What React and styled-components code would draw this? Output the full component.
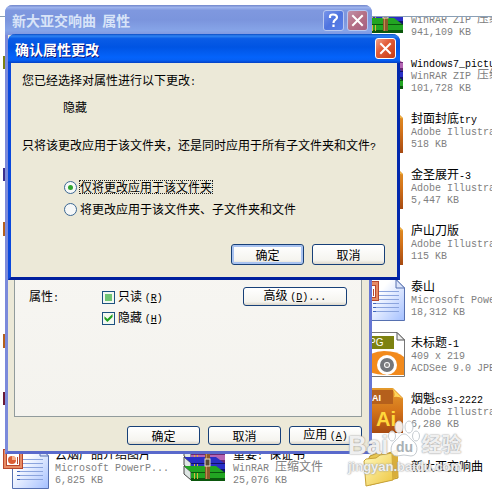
import React, { useEffect, useRef } from "react";
import styled, { createGlobalStyle } from "styled-components";

const GlobalStyle = createGlobalStyle`
  * { box-sizing: border-box; }
  body { margin: 0; background: #fff; }
  body, button, input { font: 12px/12px "Noto Sans CJK SC", sans-serif; color: #000; }
`;

const Desktop = styled.main`
  position: relative;
  height: 100vh;
  overflow: hidden;
  padding-top: 16px;
`;
const FileList = styled.section`
  height: 100%;
  overflow: hidden;
  border-top: 1px solid #8a9fb5;
`;
const Columns = styled.div`
  display: grid;
  grid-template-columns: 178px 178px 1fr;
  margin-top: -27px;
`;
const Column = styled.div`
  display: flex;
  flex-direction: column;
  justify-content: flex-end;
  min-width: 0;
`;
const Tile = styled.article`
  display: flex;
  align-items: center;
  gap: 7px;
  height: 56px;
  white-space: nowrap;
  overflow: hidden;
  svg { flex: none; overflow: visible; }
`;
const FileText = styled.div`
  display: flex;
  flex-direction: column;
  color: #808080;
`;
const Line = styled.span`
  height: 12px;
  color: ${(p) => (p.$name ? "#000" : "inherit")};
`;
const Latin = styled.span`
  font-family: "Liberation Mono", monospace;
  font-size: 10px;
`;

const Win = styled.section`
  position: absolute;
  border-radius: 8px 8px 0 0;
  background: #ece9d8;
  border: 3px solid;
  border-top: 0;
`;
const PropertiesWin = styled(Win)`
  left: 5px;
  right: 120px;
  top: 5px;
  border-color: #7b88dc #6676d4 #5969cb #7b8adb;
`;
const ConfirmWin = styled(Win)`
  left: 8px;
  right: 92px;
  top: 34px;
  border-color: #0a48dc #0228ac #001f9e #0a48dc;
`;
const TitleBar = styled.header`
  display: flex;
  align-items: center;
  gap: 3px;
  height: ${(p) => (p.$active ? "29px" : "30px")};
  margin: 0 -3px;
  padding: 0 4px 0 7px;
  border-radius: 7px 7px 0 0;
  background: ${(p) =>
    p.$active
      ? "linear-gradient(#0a4cc4 0, #2f83f2 7%, #0a5ce6 16%, #0054e3 45%, #0463fb 80%, #0560f5 90%, #0340c4 100%)"
      : "linear-gradient(#7085ca 0, #9db3ec 8%, #7f98df 18%, #7b95dd 50%, #86a4e8 85%, #7f95df 100%)"};
`;
const Title = styled.h1`
  flex: 1;
  margin: 0;
  font-size: 14px;
  line-height: 20px;
  font-weight: 700;
  white-space: pre;
  color: ${(p) => (p.$active ? "#fff" : "#d8e4f8")};
  text-shadow: ${(p) => (p.$active ? "1px 1px #0a1883" : "none")};
`;
const CaptionButton = styled.button`
  width: 21px;
  height: 21px;
  padding: 0;
  display: grid;
  place-items: center;
  border: 1px solid ${(p) => (p.$kind === "close" ? "#fff" : "#b8c8f0")};
  border-radius: 3px;
  background: ${(p) =>
    ({
      close: "linear-gradient(135deg, #f0a088, #e35d3a 40%, #c63c14)",
      dimClose: "linear-gradient(135deg, #c090a8, #b56f84 50%, #a56082)",
      help: "linear-gradient(135deg, #7794ea, #4f74df 50%, #5a80e8)",
    })[p.$kind]};
`;

const PropertiesBody = styled.div`
  padding: 4px 7px 6px 6px;
`;
const TabPanel = styled.div`
  display: flex;
  align-items: flex-start;
  padding: 247px 14px 89px;
  background: linear-gradient(#fbfaf8, #f4f3ee);
  border: 1px solid #919b9c;
`;
const GroupLabel = styled.span`
  width: 73px;
  line-height: 18px;
`;
const Checks = styled.div`
  flex: 1;
  display: flex;
  flex-direction: column;
  align-items: flex-start;
  gap: 3px;
  padding-top: 1px;
`;
const Choice = styled.label`
  display: flex;
  align-items: center;
  gap: 3px;
  height: 18px;
  white-space: nowrap;
`;
const CheckBox = styled.input`
  appearance: none;
  width: 13px;
  height: 13px;
  margin: 0;
  border: 1px solid #1c5180;
  background: #f3f8f1;
  display: grid;
  place-items: center;
  &:indeterminate::before {
    content: "";
    width: 7px;
    height: 7px;
    background: #70c474;
  }
  &:checked:not(:indeterminate)::before {
    content: "";
    width: 9px;
    height: 9px;
    background: #21a121;
    clip-path: polygon(5% 30%, 38% 60%, 95% 5%, 95% 38%, 38% 95%, 5% 62%);
  }
`;
const Radio = styled.input`
  appearance: none;
  width: 13px;
  height: 13px;
  margin: 0;
  border: 1px solid #3b6793;
  border-radius: 50%;
  background: #f6f8f8;
  display: grid;
  place-items: center;
  &:checked::before {
    content: "";
    width: 5px;
    height: 5px;
    border-radius: 50%;
    background: #2fa52f;
  }
`;
const RadioText = styled.span`
  line-height: 12px;
  outline: ${(p) => (p.$focused ? "1px dotted #222" : "none")};
`;
const Button = styled.button`
  width: ${(p) => (p.$wide ? "104px" : "73px")};
  height: ${(p) => (p.$tall ? "21px" : "19px")};
  padding: 0;
  line-height: 14px;
  border: 1px solid #174078;
  border-radius: 3px;
  background: linear-gradient(#fff, #f5f4ef 80%, #dcd7cb);
  box-shadow: ${(p) =>
    p.$primary ? "inset 0 0 0 2px #a9c3f0" : "none"};
`;
const ButtonRow = styled.footer`
  display: flex;
  justify-content: flex-end;
  gap: 8px;
  padding-top: ${(p) => p.$top};
`;

const ConfirmBody = styled.div`
  padding: 8px 12px 12px 11px;
`;
const Message = styled.p`
  margin: 0;
  line-height: 18px;
  white-space: nowrap;
`;
const Change = styled(Message)`
  padding: 6px 0 20px 41px;
`;
const Options = styled.fieldset`
  display: flex;
  flex-direction: column;
  align-items: flex-start;
  gap: 4px;
  margin: 0;
  border: 0;
  padding: 21px 0 0 42px;
`;

const Watermark = styled.div`
  position: absolute;
  right: 28px;
  bottom: 16px;
  width: 116px;
  pointer-events: none;
  color: rgba(255, 255, 255, 0.85);
  text-shadow: 0 0 2px #999, 0 0 1px #aaa;
  font-family: "Liberation Sans", "Noto Sans CJK SC", sans-serif;
  font-weight: 700;
`;
const Brand = styled.div`
  display: flex;
  align-items: flex-end;
  height: 46px;
  font-size: 26px;
  line-height: 26px;
`;
const Paw = styled.div`
  display: grid;
  place-items: end center;
  > * { grid-area: 1 / 1; }
`;
const Du = styled.span`
  font-size: 14px;
  line-height: 22px;
  color: #a9b1b5;
  text-shadow: none;
`;
const Experience = styled.span`
  font-size: 20px;
  padding-left: 1px;
`;
const SiteName = styled.div`
  font-size: 13px;
  line-height: 18px;
`;

function Mixed({ children }) {
  return children
    .split(/([\x20-\x7e]+)/)
    .filter(Boolean)
    .map((t, i) => (/^[\x20-\x7e]/.test(t) ? <Latin key={i}>{t}</Latin> : t));
}

function Key({ children }) {
  return (
    <Latin>
      (<u>{children}</u>)
    </Latin>
  );
}

const Cross = () => (
  <svg width="13" height="13" viewBox="0 0 13 13" stroke="#fff" strokeWidth="2" strokeLinecap="square">
    <path d="M2 2 11 11M11 2 2 11" />
  </svg>
);
const Question = () => (
  <svg width="13" height="15" viewBox="0 0 13 15" stroke="#fff" strokeWidth="2.2" fill="none">
    <path d="M3 5V3.5Q3 1.5 6 1.5Q10 1.5 10 4.2Q10 5.8 8 7Q6.5 8 6.5 10M6.5 11.5V14" />
  </svg>
);

function DocIcon({ tag, color }) {
  return (
    <svg width="48" height="48" viewBox="0 0 48 48">
      <path d="M9 2.500H41L48.500 10V46.500H9Z" fill="#fff" stroke="#777" />
      <path d="M41 2.500V10H48.500Z" fill="#eee" stroke="#555" />
      <rect x="3" y="6" width="35" height="13" fill={color} />
      <text x="8" y="16" fontSize="10" fontFamily="Liberation Sans" fill="#fff">{tag}</text>
      <path d="M9 31Q14 21 28 21Q42 21 48 27V45H29Q13 44 9 38Z" fill="#f28a1c" />
      <circle cx="31" cy="35" r="10" fill="#fff" />
      <circle cx="31" cy="35" r="5" fill="#fff" stroke="#74777c" strokeWidth="4" />
      <circle cx="31" cy="35" r="2" fill="#888" />
    </svg>
  );
}
function AiIcon() {
  return (
    <svg width="48" height="48" viewBox="0 0 48 48">
      <defs>
        <linearGradient id="ai" x1="0" y1="0" x2="0" y2="1">
          <stop offset="0" stopColor="#e49a2c" />
          <stop offset="0.5" stopColor="#d4741a" />
          <stop offset="1" stopColor="#a64a12" />
        </linearGradient>
      </defs>
      <path d="M10 2H37L47 12V47H10Z" fill="url(#ai)" />
      <path d="M36 2Q40 8 38 11Q43 10 47 13Z" fill="#ffd65a" />
      <rect x="3" y="4" width="34" height="14" fill="#b5601c" />
      <text x="16" y="15" fontSize="9" fontWeight="700" fontFamily="Liberation Sans" fill="#fff">AI</text>
      <text x="20" y="40" fontSize="20" fontWeight="700" fontFamily="Liberation Sans" fill="#ffd83c">Ai</text>
    </svg>
  );
}
function PptIcon() {
  return (
    <svg width="48" height="48" viewBox="0 0 48 48">
      <defs>
        <linearGradient id="ppt" x1="0" y1="0" x2="1" y2="1">
          <stop offset="0.3" stopColor="#fff" />
          <stop offset="1" stopColor="#a3bfff" />
        </linearGradient>
      </defs>
      <path d="M12.500 5.500H40L48.500 14V46.500H12.500Z" fill="url(#ppt)" stroke="#5670b0" />
      <path d="M40 5.500V14H48.500Z" fill="#dce5fa" stroke="#5670b0" />
      <path d="M17 17.500H43M17 21.500H43M17 25.500H43M17 29.500H43M17 33.500H43M17 37.500H43" stroke="#8ba4dd" />
      <path d="M17 29.500H20M17 33.500H20M17 37.500H20" stroke="#3f65bd" />
      <rect x="3.500" y="7.500" width="19" height="19" fill="#e68b64" stroke="#b8472c" />
      <rect x="6.500" y="11.500" width="13" height="12" fill="#fff" stroke="#b8472c" />
      <circle cx="12" cy="18" r="4" fill="#db5e35" />
      <path d="M12 18V14A4 4 0 0 1 16 18Z" fill="#f7b18d" />
      <path d="M17.500 15V22" stroke="#b8472c" />
    </svg>
  );
}
function RarIcon() {
  const books = [["#b565b4", "#6b2a73", 12], ["#2a2fc6", "#11116a", 21], ["#22a522", "#0b570d", 30]];
  return (
    <svg width="48" height="48" viewBox="0 0 48 48">
      {books.map(([light, dark, y]) => (
        <g key={y}>
          <path d={`M6 ${y - 6}L13 ${y}V${y + 8}L6 ${y + 2}Z`} fill="#dfe6e4" stroke="#444" />
          <path d={`M6 ${y - 6}H38L46 ${y}H13Z`} fill={light} />
          <rect x="13" y={y} width="34" height="9" fill={dark} />
          <rect x="13" y={y + 1} width="34" height="5" fill={light} />
          <path d={`M16.500 ${y + 1}V${y + 7}M19.500 ${y + 1}V${y + 7}`} stroke="#d8b83a" />
        </g>
      ))}
      <path d="M27 4H32V37H27Z" fill="#8c5a2c" />
      <path d="M28.500 4V37" stroke="#c38d52" />
      <rect x="27" y="17" width="5" height="7" fill="#5c4a35" stroke="#e7dfcb" />
    </svg>
  );
}
function FolderIcon() {
  return (
    <svg width="48" height="48" viewBox="0 0 48 48">
      <defs>
        <linearGradient id="folder" x1="0" y1="0" x2="1" y2="1">
          <stop offset="0" stopColor="#fffbc0" />
          <stop offset="1" stopColor="#eec53f" />
        </linearGradient>
      </defs>
      <path d="M12 18 14 14 24 10 27 13 41 8 42 36 14 43Z" fill="#e9c854" stroke="#b8942c" />
      <path d="M8 19 10 17 20 16 24 13 36 11 37 38 10 44Z" fill="url(#folder)" stroke="#c7a238" />
      <path d="M37 38 42 34V9L36 11Z" fill="#d9ae3a" />
    </svg>
  );
}

const icons = {
  rar: <RarIcon />,
  ai: <AiIcon />,
  ppt: <PptIcon />,
  jpg: <DocIcon tag="JPG" color="#7d8210" />,
  psd: <DocIcon tag="PSD" color="#3b2f8f" />,
  pdf: <DocIcon tag="PDF" color="#6a1a38" />,
  folder: <FolderIcon />,
};

const files = [
  [
    ["jpg"], ["rar"], ["psd"], ["ai"], ["rar"], ["ai"], ["pdf"],
    ["ppt", "云烟产品介绍图片", "Microsoft PowerP...", "6,825 KB"],
  ],
  [["rar", "重要: 保证书", "WinRAR 压缩文件", "25,076 KB"]],
  [
    ["rar", "", "WinRAR ZIP 压缩文件", "941,109 KB"],
    ["rar", "Windows7_picture", "WinRAR ZIP 压缩文件", "101,728 KB"],
    ["ai", "封面封底try", "Adobe Illustrator", "518 KB"],
    ["ai", "金圣展开-3", "Adobe Illustrator", "5,447 KB"],
    ["ai", "庐山刀版", "Adobe Illustrator", "115 KB"],
    ["ppt", "泰山", "Microsoft PowerPoint", "18,312 KB"],
    ["jpg", "未标题-1", "409 x 219", "ACDSee 9.0 JPEG"],
    ["ai", "烟魁cs3-2222", "Adobe Illustrator", "6,280 KB"],
    ["folder", "新大亚交响曲"],
  ],
];

function FileTile({ file: [icon, ...lines] }) {
  return (
    <Tile>
      {icons[icon]}
      <FileText>
        {lines.map((line, i) => (
          <Line key={i} $name={i === 0}>
            <Mixed>{line}</Mixed>
          </Line>
        ))}
      </FileText>
    </Tile>
  );
}

function Properties() {
  const readOnly = useRef(null);
  useEffect(() => {
    readOnly.current.indeterminate = true;
  }, []);
  return (
    <PropertiesWin>
      <TitleBar>
        <Title>新大亚交响曲  属性</Title>
        <CaptionButton $kind="help" aria-label="帮助"><Question /></CaptionButton>
        <CaptionButton $kind="dimClose" aria-label="关闭"><Cross /></CaptionButton>
      </TitleBar>
      <PropertiesBody>
        <TabPanel>
          <GroupLabel>属性<Latin>:</Latin></GroupLabel>
          <Checks>
            <Choice><CheckBox ref={readOnly} type="checkbox" /><span>只读 <Key>R</Key></span></Choice>
            <Choice><CheckBox type="checkbox" defaultChecked /><span>隐藏 <Key>H</Key></span></Choice>
          </Checks>
          <Button $wide>高级 <Key>D</Key><Latin>...</Latin></Button>
        </TabPanel>
        <ButtonRow $top="9px">
          <Button>确定</Button>
          <Button>取消</Button>
          <Button>应用 <Key>A</Key></Button>
        </ButtonRow>
      </PropertiesBody>
    </PropertiesWin>
  );
}

function Confirm() {
  return (
    <ConfirmWin role="dialog">
      <TitleBar $active>
        <Title $active>确认属性更改</Title>
        <CaptionButton $kind="close" aria-label="关闭"><Cross /></CaptionButton>
      </TitleBar>
      <ConfirmBody>
        <Message>您已经选择对属性进行以下更改<Latin>:</Latin></Message>
        <Change>隐藏</Change>
        <Message>只将该更改应用于该文件夹，还是同时应用于所有子文件夹和文件<Latin>?</Latin></Message>
        <Options>
          <Choice><Radio type="radio" name="scope" defaultChecked /><RadioText $focused>仅将更改应用于该文件夹</RadioText></Choice>
          <Choice><Radio type="radio" name="scope" /><RadioText>将更改应用于该文件夹、子文件夹和文件</RadioText></Choice>
        </Options>
        <ButtonRow $top="26px">
          <Button $tall $primary>确定</Button>
          <Button $tall>取消</Button>
        </ButtonRow>
      </ConfirmBody>
    </ConfirmWin>
  );
}

export default function App() {
  return (
    <>
      <GlobalStyle />
      <Desktop>
        <FileList>
          <Columns>
            {files.map((column, c) => (
              <Column key={c}>
                {column.map((file, r) => <FileTile key={r} file={file} />)}
              </Column>
            ))}
          </Columns>
        </FileList>
        <Properties />
        <Confirm />
        <Watermark>
          <Brand>
            <span>Bai</span>
            <Paw>
              <svg width="32" height="38" viewBox="0 0 32 38" fill="#fff" fillOpacity="0.88" stroke="#c5cbd0">
                <ellipse cx="4" cy="16" rx="3.500" ry="5" />
                <ellipse cx="11" cy="7" rx="4" ry="6" />
                <ellipse cx="21" cy="7" rx="4" ry="6" />
                <ellipse cx="28" cy="16" rx="3.500" ry="5" />
                <path d="M16 14C20 14 21 18 25 21C31 25 30 36 23 36Q16 34 9 36C2 36 1 26 7 21C11 18 12 14 16 14Z" />
              </svg>
              <Du>du</Du>
            </Paw>
            <Experience>经验</Experience>
          </Brand>
          <SiteName>jingyan.baidu.com</SiteName>
        </Watermark>
      </Desktop>
    </>
  );
}
